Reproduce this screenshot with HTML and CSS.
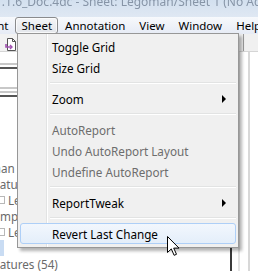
FILE: index.html
```html
<!DOCTYPE html>
<html lang="en">
<head>
    <meta charset="UTF-8">
    <title>Sheet menu</title>
    <link rel="stylesheet" href="styles.css">
</head>
<body>
<div class="window">

    <!-- Title bar -->
    <div class="titlebar">
        <span class="title">1.1.6_Doc.4dc - Sheet: Legoman/Sheet 1 (No Active Report)</span>
    </div>

    <!-- Menu bar -->
    <div class="menubar">
        <span class="menu-item cut">Document</span>
        <span class="menu-item open">Sheet</span>
        <span class="menu-item">Annotation</span>
        <span class="menu-item">View</span>
        <span class="menu-item">Window</span>
        <span class="menu-item">Help</span>
    </div>

    <!-- Application area behind the menu -->
    <div class="workspace">
        <div class="sidebar">
            <div class="toolbar">
                <svg class="tool-icon" width="12" height="13" viewBox="0 0 12 13">
                    <path d="M2.5 0.5h5l3 3v9h-8z" fill="#fff" stroke="#555"/>
                    <path d="M7.5 0.5v3h3" fill="none" stroke="#555"/>
                    <path d="M1 6v3h5" fill="none" stroke="#a050b0" stroke-width="1.6"/>
                    <path d="M5 7l2 2-2 2" fill="none" stroke="#a050b0" stroke-width="1.4"/>
                </svg>
            </div>
            <div class="panel">
                <div class="rule light"></div>
                <div class="rule dark"></div>
                <div class="spacer"></div>
                <div class="rule light"></div>
                <div class="rule light"></div>
                <div class="rule dark"></div>
                <div class="tree">
                    <div class="tree-row name">Legoman</div>
                    <div class="tree-row group">Features</div>
                    <div class="tree-row check"><span class="box"></span>Legs</div>
                    <div class="tree-row group">Samples</div>
                    <div class="tree-row check"><span class="box"></span>Legs</div>
                    <div class="tree-row sel"></div>
                    <div class="tree-row group">Features (54)</div>
                </div>
            </div>
        </div>
        <div class="mainpane">
            <div class="toolbar main-tools"></div>
            <div class="sheet-area"></div>
        </div>
    </div>

    <!-- Open dropdown menu -->
    <div class="dropdown">
        <div class="dd-item">Toggle Grid</div>
        <div class="dd-item">Size Grid</div>
        <div class="dd-sep"></div>
        <div class="dd-item sub">Zoom</div>
        <div class="dd-sep"></div>
        <div class="dd-item disabled">AutoReport</div>
        <div class="dd-item disabled">Undo AutoReport Layout</div>
        <div class="dd-item disabled">Undefine AutoReport</div>
        <div class="dd-sep"></div>
        <div class="dd-item sub">ReportTweak</div>
        <div class="dd-sep"></div>
        <div class="dd-item hover">Revert Last Change</div>
    </div>

    <svg class="cursor" width="13" height="20" viewBox="0 0 13 20">
        <path d="M0.5 0.5v16l3.8-3.6 2.8 6.4 2.4-1-2.8-6.2h5.3z" fill="#fff" stroke="#000"/>
    </svg>
</div>
</body>
</html>
```

FILE: styles.css
```css
* {
    margin: 0;
    padding: 0;
    box-sizing: border-box;
}

body {
    font-family: "Noto Sans", "Open Sans", sans-serif;
    font-size: 11.7px;
    background: #fff;
}

.window {
    position: relative;
    width: 258px;
    height: 271px;
    overflow: hidden;
}

/* Title bar */
.titlebar {
    height: 17px;
    background: linear-gradient(#d3e0ef, #dfe8f3);
    overflow: hidden;
    white-space: nowrap;
}

.title {
    display: block;
    margin: -7px 0 0 -5px;
    font-size: 12px;
    color: #8795a7;
    filter: blur(0.5px);
}

/* Menu bar */
.menubar {
    height: 17px;
    display: flex;
    align-items: center;
    background: linear-gradient(#f7f9fc, #e6ebf5);
    white-space: nowrap;
    color: #000;
    font-size: 11.5px;
}

.menu-item {
    padding: 0 7px;
    line-height: 15px;
}

.menu-item.cut {
    margin-left: -55px;
}

.menu-item.open {
    border: 1px solid #8a8b8d;
    border-radius: 3px;
    background: linear-gradient(#f4f5f7, #e3e6eb);
    padding: 0 5px;
    box-shadow: inset 0 0 0 1px rgba(255,255,255,0.7);
}

/* Workspace behind menu */
.workspace {
    display: flex;
    height: 237px;
}

.sidebar {
    width: 232px;
    border-right: 2px solid #3a3a3a;
    display: flex;
    flex-direction: column;
}

.toolbar {
    height: 18px;
    background: #f2f2f2;
    border-bottom: 1px solid #d5d5d5;
    padding: 4px 0 0 5px;
}

.panel {
    flex: 1;
    background: #fff;
    padding-top: 11px;
}

.rule {
    height: 2px;
}

.rule.light {
    background: #c8c8c8;
    margin-bottom: 2px;
}

.rule.dark {
    background: #555;
}

.spacer {
    height: 18px;
}

.tree {
    padding-top: 63px;
    color: #6a6a6a;
}

.tree-row {
    height: 16px;
    line-height: 16px;
    white-space: nowrap;
}

.tree-row.name {
    margin-left: -37px;
}

.tree-row.group {
    margin-left: -13px;
}

.tree-row.check {
    margin-left: -2px;
    display: flex;
    align-items: center;
    gap: 3px;
}

.box {
    width: 7px;
    height: 8px;
    border: 1px solid #b8b8b8;
}

.tree-row.sel {
    background: linear-gradient(90deg, #c9dcf3 0, #c9dcf3 4px, transparent 4px);
}

.mainpane {
    flex: 1;
    display: flex;
    flex-direction: column;
}

.main-tools {
    border-left: 1px solid #c9c9c9;
    background: linear-gradient(90deg, #f0f0f0 0, #f0f0f0 10px, #9a9a9a 10px, #9a9a9a 11px, #f0f0f0 11px);
}

.sheet-area {
    flex: 1;
    background: linear-gradient(90deg, #fff 0, #fff 6px, #e4e4e4 6px, #e4e4e4 8px, #fff 8px, #fff 16px, #d8d8d8 16px, #d8d8d8 18px, #fff 18px);
}

/* Dropdown menu */
.dropdown {
    position: absolute;
    left: 17px;
    top: 33px;
    width: 222px;
    padding: 2px 2px 3px 2px;
    background: #f0f0f0;
    border: 1px solid #979797;
    box-shadow: 3px 3px 3px rgba(0, 0, 0, 0.3);
    background-image: linear-gradient(90deg, transparent 28px, #e2e3e3 28px, #e2e3e3 29px, #fff 29px, #fff 30px, transparent 30px);
}

.dd-item {
    position: relative;
    height: 21px;
    line-height: 21px;
    padding-left: 31px;
    color: #000;
    white-space: nowrap;
    border: 1px solid transparent;
    border-radius: 3px;
}

.dd-item.disabled {
    color: #6d6d6d;
}

.dd-item.sub::after {
    content: "";
    position: absolute;
    right: 9px;
    top: 6px;
    border-left: 4px solid #000;
    border-top: 4px solid transparent;
    border-bottom: 4px solid transparent;
}

.dd-item.hover {
    border-color: #aecff7;
    background: linear-gradient(#f2f7fd, #e4eefa);
}

.dd-sep {
    height: 10px;
    margin-left: 30px;
    background: linear-gradient(transparent 4px, #e2e3e3 4px, #e2e3e3 5px, #fff 5px, #fff 6px, transparent 6px);
}

.cursor {
    position: absolute;
    left: 167px;
    top: 236px;
}
```
